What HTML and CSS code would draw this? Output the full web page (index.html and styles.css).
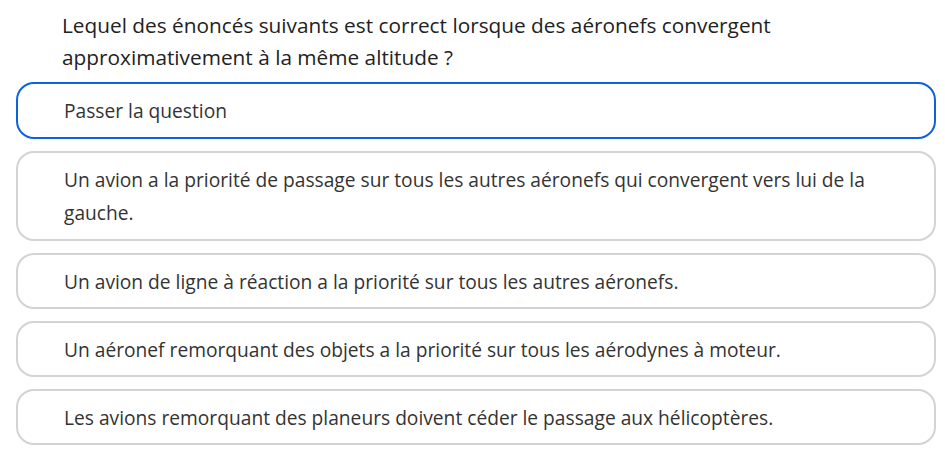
FILE: index.html
```html
<!DOCTYPE html>
<html lang="fr">
<head>
<meta charset="utf-8">
<link rel="stylesheet" href="styles.css">
</head>
<body>
<div class="quiz">
  <p class="question">Lequel des énoncés suivants est correct lorsque des aéronefs convergent approximativement à la même altitude ?</p>
  <div class="options">
    <div class="option selected">Passer la question</div>
    <div class="option wrap">Un avion a la priorité de passage sur tous les autres aéronefs qui convergent vers lui de la gauche.</div>
    <div class="option">Un avion de ligne à réaction a la priorité sur tous les autres aéronefs.</div>
    <div class="option">Un aéronef remorquant des objets a la priorité sur tous les aérodynes à moteur.</div>
    <div class="option">Les avions remorquant des planeurs doivent céder le passage aux hélicoptères.</div>
  </div>
</div>
</body>
</html>
```

FILE: styles.css
```css
html, body {
  margin: 0;
  padding: 0;
  background: #ffffff;
}
body {
  font-family: "Open Sans", "Noto Sans", sans-serif;
  color: #2b2b2b;
}
.quiz {
  padding: 9px 0 0 16px;
  width: 920px;
}
.question {
  margin: 0 0 9px 46px;
  font-size: 20.8px;
  line-height: 32px;
  color: #222222;
  padding-right: 100px;
}
.options {
  display: flex;
  flex-direction: column;
  gap: 12px;
}
.option {
  border: 2px solid #d3d3d3;
  border-radius: 18px;
  padding: 9.5px 60px 9.5px 46px;
  font-size: 19.2px;
  line-height: 33px;
  color: #333333;
}
.option.wrap {
  padding-top: 10px;
  padding-bottom: 10px;
}
.option.selected {
  border-color: #0b63de;
  padding-top: 10px;
  padding-bottom: 10px;
}
```
